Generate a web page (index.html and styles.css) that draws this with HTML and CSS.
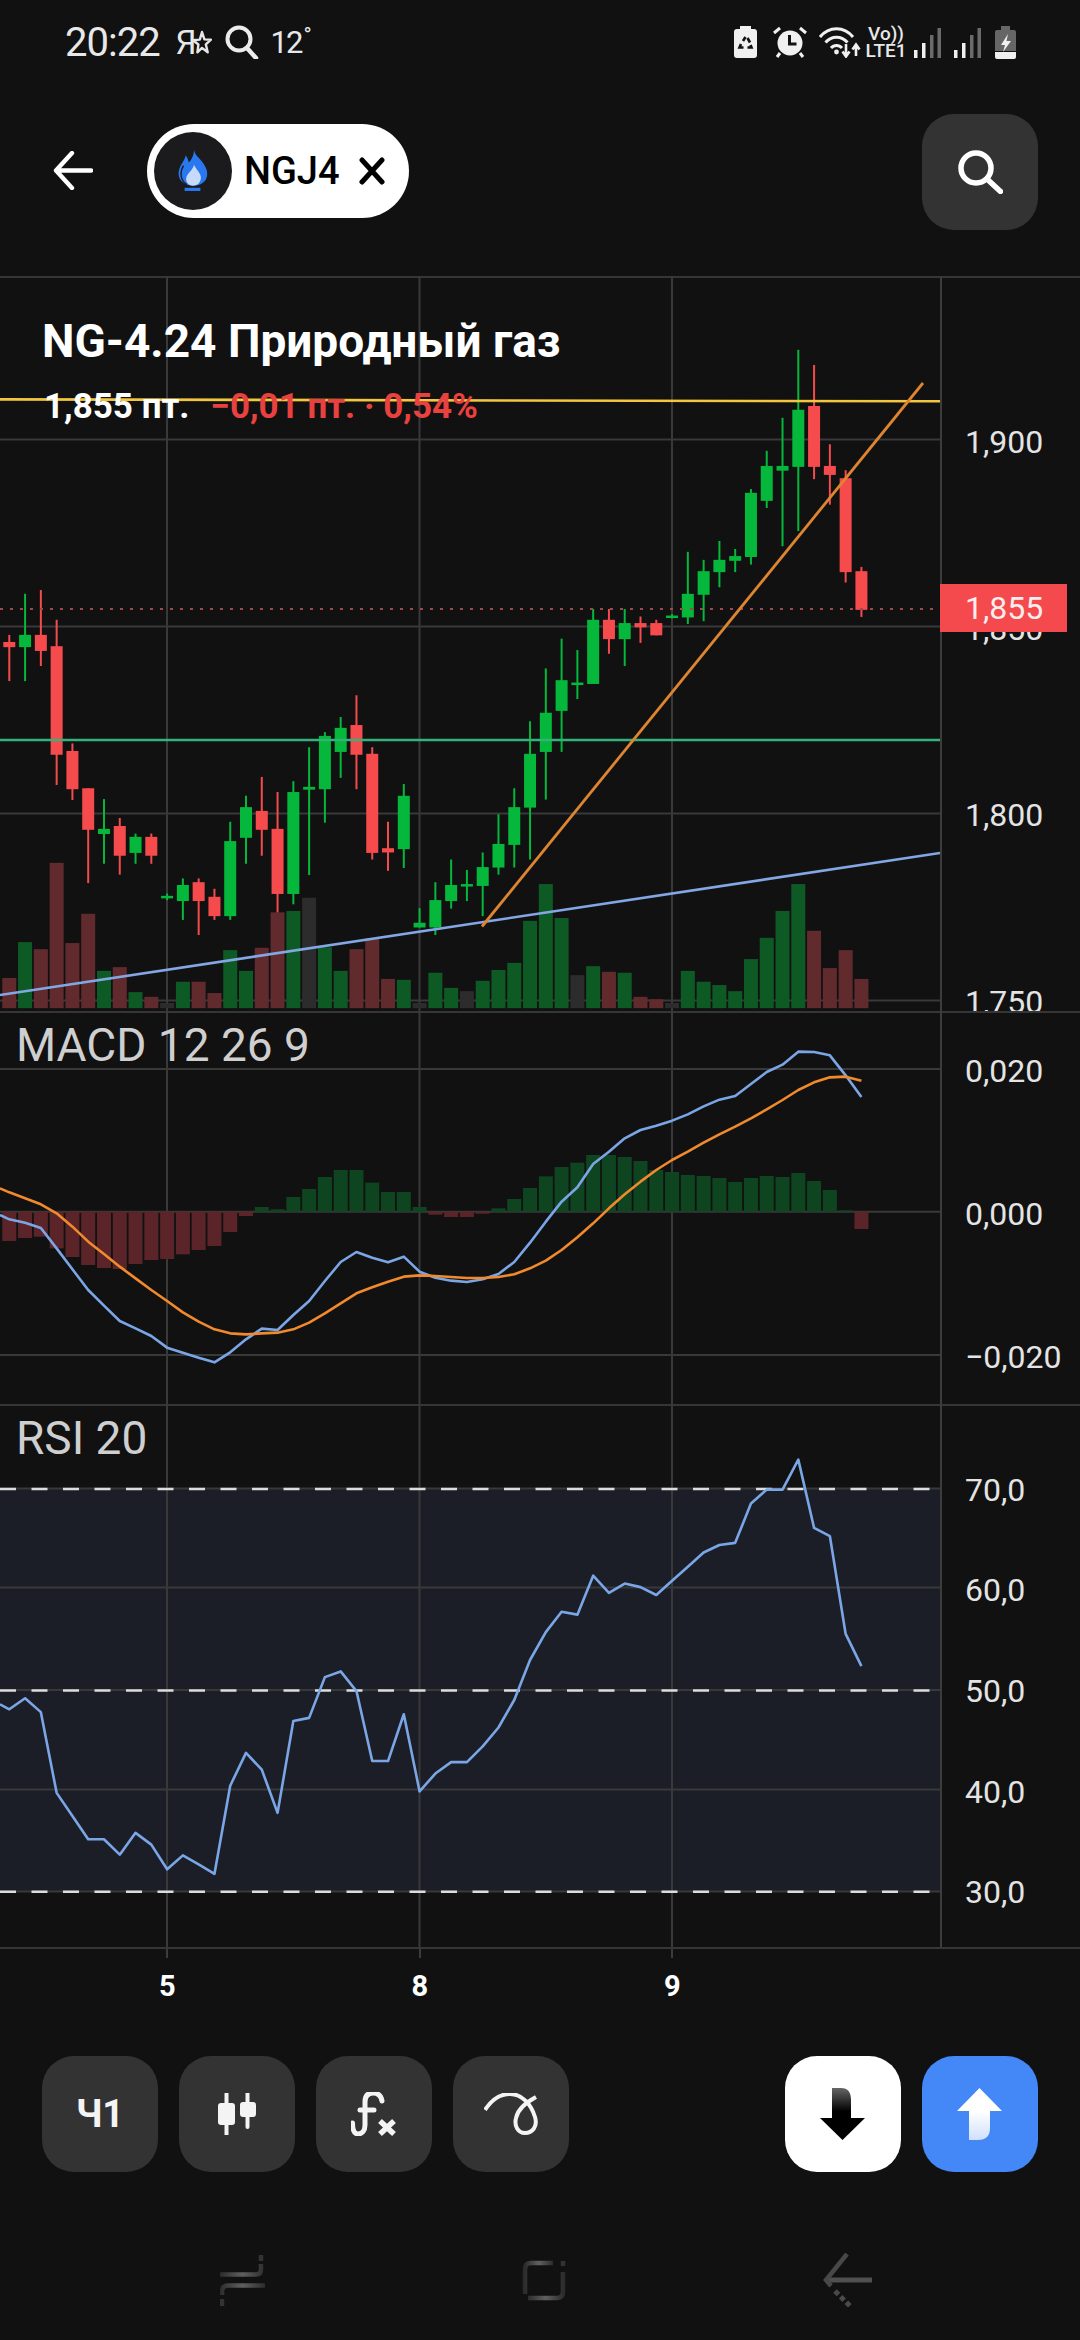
FILE: index.html
```html
<!DOCTYPE html>
<html lang="ru">
<head>
  <meta charset="UTF-8">
  <meta name="viewport" content="width=device-width, initial-scale=1.0">
  <title>NG-4.24</title>
  <link rel="stylesheet" href="styles.css">
</head>
<body>
  <div class="screen">
    <!-- status bar -->
    <div class="status-bar">
      <div class="status-left">
        <span class="clock">20:22</span>
        <span class="ya">Я</span>
        <svg class="star" viewBox="0 0 20 25"><path d="M10 2l2.400 7.400 6.600.3-5.200 4.600 1.900 8-5.700-4.400-4.600 4.400 1-7.800L1 10.200l6.800-.6z" fill="none" stroke="#e6e6e6" stroke-width="2.400" stroke-linejoin="round"/></svg>
        <svg class="status-search" viewBox="0 0 34 34"><circle cx="14" cy="14" r="11.500" fill="none" stroke="#ececec" stroke-width="4"/><path d="M22 23l9 10" stroke="#ececec" stroke-width="4.500" stroke-linecap="round"/></svg>
        <span class="temp">12<sup>°</sup></span>
      </div>
      <div class="status-right">
        <svg class="ic-bat" viewBox="0 0 23 32">
          <path d="M6 0h11v3h3a3 3 0 0 1 3 3v23a3 3 0 0 1-3 3H3a3 3 0 0 1-3-3V6a3 3 0 0 1 3-3h3z" fill="#f0f0f0"/>
          <path d="M11.500 11l-2.500 4M13.500 12l2.500 4.500M16.500 19l1 2.500h-4M9.500 21.500H5.500l1.500-3.500" fill="none" stroke="#111" stroke-width="2.600"/>
        </svg>
        <svg class="ic-alarm" viewBox="0 0 34 32">
          <circle cx="17" cy="17" r="12.500" fill="#f0f0f0"/>
          <path d="M16.500 9v9h7" fill="none" stroke="#111" stroke-width="3"/>
          <path d="M1 7l6-5M33 7l-6-5M7 27l-3 4M27 27l3 4" stroke="#f0f0f0" stroke-width="3"/>
        </svg>
        <svg class="ic-wifi" viewBox="0 0 42 32">
          <path d="M1 11C10 0 25 0 34 11M6.500 16.500c6-7 16-7 22 0M12 22c3-3.500 8-3.500 11 0" fill="none" stroke="#f0f0f0" stroke-width="3"/>
          <circle cx="17.500" cy="26" r="2.400" fill="#f0f0f0"/>
          <path d="M27 18v11M23.500 25.500l3.500 5 3.500-5M37 30V20M33.500 23.500l3.500-5 3.500 5" fill="none" stroke="#f0f0f0" stroke-width="2.600"/>
        </svg>
        <div class="ic-net"><span>Vo))</span><span>LTE1</span></div>
        <svg class="ic-signal" viewBox="0 0 27 30">
          <rect x="0" y="22" width="3.500" height="8" fill="#f0f0f0"/><rect x="8" y="15" width="3.500" height="15" fill="#f0f0f0"/>
          <rect x="16" y="7" width="3.500" height="23" fill="#6a6a6a"/><rect x="23.500" y="0" width="3.500" height="30" fill="#6a6a6a"/>
        </svg>
        <svg class="ic-signal2" viewBox="0 0 27 30">
          <rect x="0" y="22" width="3.500" height="8" fill="#f0f0f0"/><rect x="8" y="15" width="3.500" height="15" fill="#f0f0f0"/>
          <rect x="16" y="7" width="3.500" height="23" fill="#6a6a6a"/><rect x="23.500" y="0" width="3.500" height="30" fill="#6a6a6a"/>
        </svg>
        <svg class="ic-charge" viewBox="0 0 21 33">
          <path d="M6 0h9v4h4a2 2 0 0 1 2 2v19H0V6a2 2 0 0 1 2-2h4z" fill="#666"/>
          <path d="M0 26h21v5a2 2 0 0 1-2 2H2a2 2 0 0 1-2-2z" fill="#f0f0f0"/>
          <path d="M13 8L6 19h4l-2 7 8-11h-4.500z" fill="#f0f0f0"/>
        </svg>
      </div>
    </div>

    <!-- top bar -->
    <div class="top-bar">
      <svg class="back" viewBox="0 0 40 39"><path d="M38 19.500H4M19 2L3 19.500 19 37" fill="none" stroke="#fff" stroke-width="4.400" stroke-linecap="round" stroke-linejoin="round"/></svg>
      <div class="ticker-pill">
        <div class="ticker-logo">
          <svg viewBox="0 0 30 40" class="flame">
            <path d="M16 0c1 7 9 9 12 19 2.500 9-4 15-13 15S0 28 1.500 20C3 13 7 11 8 5c2 3 3 6 3 7 3-3 5-8 5-12z" fill="#2a78f0"/>
            <path d="M6 15C2 21 3 29 9 33" fill="none" stroke="#1b1b1d" stroke-width="1.300"/>
            <path d="M16 14c2 5 7 8 6.500 13-.5 5-4 7-7.500 7-4 0-7-3-6.500-7 .5-5 6-7 7.500-13z" fill="#c6daf9"/>
            <rect x="7" y="36" width="15" height="3" fill="#2a78f0"/>
          </svg>
        </div>
        <span class="ticker-name">NGJ4</span>
        <svg class="ticker-x" viewBox="0 0 26 28"><path d="M3 3l20 22M23 3L3 25" stroke="#000" stroke-width="5" stroke-linecap="round"/></svg>
      </div>
      <button class="tool-btn search-btn">
        <svg class="search-ic" viewBox="0 0 45 44"><circle cx="18" cy="18" r="15" fill="none" stroke="#fff" stroke-width="5.500"/><path d="M29 29l13.500 12.500" stroke="#fff" stroke-width="5.500" stroke-linecap="round"/></svg>
      </button>
    </div>

    <!-- chart panes -->
    <div class="pane pane-main">
      <svg class="plot" id="main-plot"></svg>
      <div class="axis">
        <span class="tick" style="top:167px">1,900</span>
        <span class="tick" style="top:354px">1,850</span>
        <span class="tick" style="top:540px">1,800</span>
        <span class="tick" style="top:727px">1,750</span>
        <div class="price-tag">1,855</div>
      </div>
      <div class="quote">
        <div class="quote-title">NG-4.24 Природный газ</div>
        <div class="quote-sub"><span>1,855 пт.</span><span class="quote-change">−0,01 пт. · 0,54%</span></div>
      </div>
    </div>

    <div class="pane pane-macd">
      <svg class="plot" id="macd-plot"></svg>
      <div class="axis">
        <span class="tick" style="top:61px">0,020</span>
        <span class="tick" style="top:204px">0,000</span>
        <span class="tick" style="top:347px">−0,020</span>
      </div>
      <div class="pane-name">MACD 12 26 9</div>
    </div>

    <div class="pane pane-rsi">
      <svg class="plot" id="rsi-plot"></svg>
      <div class="axis">
        <span class="tick" style="top:87px">70,0</span>
        <span class="tick" style="top:187px">60,0</span>
        <span class="tick" style="top:288px">50,0</span>
        <span class="tick" style="top:389px">40,0</span>
        <span class="tick" style="top:489px">30,0</span>
      </div>
      <div class="pane-name">RSI 20</div>
    </div>

    <div class="time-axis"><span>5</span><span>8</span><span>9</span></div>

    <!-- bottom buttons -->
    <div class="actions">
      <button class="tool-btn period">Ч1</button>
      <button class="tool-btn">
        <svg class="ic-candles" viewBox="0 0 38 42">
          <path d="M8.500 0v42M29.500 0v34" stroke="#f4f4f4" stroke-width="4" stroke-linecap="round"/>
          <rect x="0" y="10" width="17" height="22" rx="3" fill="#f4f4f4"/>
          <rect x="22" y="9" width="16" height="15" rx="3" fill="#f4f4f4"/>
        </svg>
      </button>
      <button class="tool-btn">
        <svg class="ic-fx" viewBox="0 0 46 44">
          <path d="M31 9c-1-6-5-8-9-8-5 0-8 3-8 9v23c0 6-3 9-7 9-4 0-5.500-4-5.500-11M9 18h14" fill="none" stroke="#f4f4f4" stroke-width="5" stroke-linecap="round"/>
          <path d="M29 29l14 13M43 29L29 42" stroke="#f4f4f4" stroke-width="5.500"/>
        </svg>
      </button>
      <button class="tool-btn">
        <svg class="ic-loop" viewBox="0 0 54 42"><path d="M1 17C8 6 17 1 26 1c12 0 21 10 25 23 3 10-3 16-10 16s-11-7-9-15c2-10 11-16 20-21" fill="none" stroke="#f4f4f4" stroke-width="4"/></svg>
      </button>
      <button class="tool-btn sell">
        <svg class="ic-arrow" viewBox="0 0 46 52">
          <defs><linearGradient id="sell-grad" x1="0" y1="0" x2="0" y2="1"><stop offset="0" stop-color="#666"/><stop offset=".45" stop-color="#000"/></linearGradient></defs>
          <path d="M12 0h9c7 0 10 4 10 12v18h14L22.500 52 0 30h12z" fill="url(#sell-grad)"/>
        </svg>
      </button>
      <button class="tool-btn buy">
        <svg class="ic-arrow" viewBox="0 0 46 52">
          <defs><linearGradient id="buy-grad" x1="0" y1="0" x2="0" y2="1"><stop offset=".45" stop-color="#fff"/><stop offset="1" stop-color="#cfe0fc"/></linearGradient></defs>
          <path d="M22.500 0L45 23H33v17c0 8-4 12-12 12h-9V23H0z" fill="url(#buy-grad)"/>
        </svg>
      </button>
    </div>

    <!-- system nav -->
    <div class="nav-bar">
      <svg class="nav-recent" viewBox="0 0 45 51">
        <defs><linearGradient id="nav-grad"><stop offset="0" stop-color="#2c2c2c"/><stop offset=".5" stop-color="#606060"/><stop offset="1" stop-color="#2c2c2c"/></linearGradient></defs>
        <path d="M0 19.500h36q5 0 5-5V9M45 30.500H8q-6 0-6 6V40" fill="none" stroke="url(#nav-grad)" stroke-width="4.500"/>
        <path d="M41 0v6M2 44v7" stroke="#333" stroke-width="4.500"/>
      </svg>
      <svg class="nav-home" viewBox="0 0 44 41">
        <path d="M31 3H9Q3 3 3 9v25" fill="none" stroke="url(#nav-grad)" stroke-width="4.500"/>
        <path d="M6 38h29q6 0 6-6V12" fill="none" stroke="url(#nav-grad)" stroke-width="4.500"/>
        <path d="M41 1v5" stroke="#333" stroke-width="4.500"/>
      </svg>
      <svg class="nav-back" viewBox="0 0 49 54">
        <path d="M49 27H5" stroke="#505050" stroke-width="5"/>
        <path d="M24 1L3 27l5 6" fill="none" stroke="#484848" stroke-width="4.500"/>
        <path d="M12 38l15 15" stroke="#4a4a4a" stroke-width="5" stroke-dasharray="5 3"/>
      </svg>
    </div>
  </div>

  <script src="chart.js"></script>
</body>
</html>
```

FILE: styles.css
```css
* {
  box-sizing: border-box;
}

body, html {
  margin: 0;
  background: #111112;
  font-family: 'Roboto', 'Noto Sans', sans-serif;
}

.screen {
  width: 1080px;
  height: 2340px;
  display: flex;
  flex-direction: column;
  overflow: hidden;
  background: #111112;
  color: #fff;
}

/* status bar */
.status-bar {
  height: 84px;
  flex: none;
  display: flex;
  align-items: center;
  justify-content: space-between;
  padding: 0 64px 0 65px;
  color: #e8e8e8;
}

.status-left {
  display: flex;
  align-items: center;
}

.clock {
  font-size: 40px;
  letter-spacing: -1px;
  margin-right: 16px;
}

.ya {
  font-size: 33px;
  width: 16px;
}

.star {
  width: 20px;
  height: 25px;
  margin-right: 13px;
}

.status-search {
  width: 34px;
  height: 34px;
  margin-right: 12px;
}

.temp {
  font-size: 31px;
  letter-spacing: -2px;
}

.temp sup {
  font-size: 22px;
  line-height: 0;
  vertical-align: 10px;
  margin-left: 2px;
}

.status-right {
  display: flex;
  align-items: center;
}

.ic-bat {
  width: 23px;
  height: 32px;
  margin-right: 16px;
}

.ic-alarm {
  width: 34px;
  height: 32px;
  margin-right: 12px;
}

.ic-wifi {
  width: 42px;
  height: 32px;
  margin-right: 5px;
}

.ic-net {
  width: 40px;
  display: flex;
  flex-direction: column;
  align-items: center;
  font-size: 19px;
  line-height: 17px;
  font-weight: 500;
  margin-right: 8px;
}

.ic-signal,
.ic-signal2 {
  width: 27px;
  height: 30px;
  margin-top: 2px;
}

.ic-signal {
  margin-right: 13px;
}

.ic-signal2 {
  margin-right: 14px;
}

.ic-charge {
  width: 21px;
  height: 33px;
}

/* top bar */
.top-bar {
  height: 192px;
  flex: none;
  display: flex;
  align-items: flex-start;
  padding: 30px 42px 0 53px;
}

.back {
  width: 40px;
  height: 39px;
  margin-top: 37px;
  margin-right: 54px;
}

.ticker-pill {
  width: 262px;
  height: 94px;
  margin-top: 10px;
  padding-left: 7px;
  display: flex;
  align-items: center;
  border-radius: 47px;
  background: #fff;
  color: #000;
}

.ticker-logo {
  width: 78px;
  height: 78px;
  flex: none;
  display: flex;
  align-items: center;
  justify-content: center;
  border-radius: 50%;
  background: #1b1b1d;
}

.flame {
  width: 32px;
  height: 42px;
}

.ticker-name {
  font-size: 38px;
  font-weight: 500;
  margin-left: 12px;
  margin-right: 19px;
}

.ticker-x {
  width: 26px;
  height: 28px;
}

.tool-btn {
  width: 116px;
  height: 116px;
  flex: none;
  padding: 0;
  border: none;
  border-radius: 32px;
  background: #333334;
  color: #f4f4f4;
  font-family: inherit;
  display: flex;
  align-items: center;
  justify-content: center;
}

.search-btn {
  margin-left: auto;
}

.search-ic {
  width: 45px;
  height: 44px;
}

/* chart panes */
.pane {
  position: relative;
  flex: none;
  display: flex;
  overflow: hidden;
  box-shadow: inset 0 2px #363637; /* separator, must not push the plot down */
}

.pane-main {
  height: 735px;
}

.pane-macd {
  height: 393px;
}

.pane-rsi {
  height: 543px;
}

.plot {
  width: 940px;
  height: 100%;
  flex: none;
  display: block;
}

.axis {
  position: relative;
  flex: 1;
  border-left: 2px solid #3c3c3d;
}

.tick {
  position: absolute;
  left: 23px;
  font-size: 32px;
  line-height: 1;
  color: #e4e4e4;
  transform: translateY(-53%);
  white-space: nowrap;
}

.price-tag {
  position: absolute;
  top: 308px;
  left: -2px;
  width: 127px;
  height: 48px;
  padding-left: 25px;
  background: #f44a4d;
  color: #fdeeee;
  font-size: 32px;
  line-height: 48px;
}

.quote {
  position: absolute;
  left: 42px;
  top: 40px;
}

.quote-title {
  font-size: 46px;
  line-height: 50px;
  font-weight: 700;
  white-space: nowrap;
}

.quote-sub {
  display: flex;
  gap: 21px;
  margin-top: 21px;
  margin-left: 2px;
  font-size: 35px;
  line-height: 40px;
  font-weight: 700;
  white-space: nowrap;
}

.quote-change {
  color: #e8413f;
}

.pane-name {
  position: absolute;
  left: 16px;
  top: 9px;
  font-size: 46px;
  line-height: 1.100;
  color: #cfcfcf;
  white-space: nowrap;
}

/* time axis, under the last pane */
.time-axis {
  height: 109px;
  flex: none;
  display: flex;
  padding-left: 41px;
  border-top: 2px solid #363637;
  font-size: 29px;
  font-weight: 700;
}

.time-axis span {
  position: relative;
  width: 252.500px;
  padding-top: 20px;
  text-align: center;
}

.time-axis span::before {
  content: '';
  position: absolute;
  top: 0;
  left: 125px;
  width: 2px;
  height: 9px;
  background: #3c3c3d;
}

/* bottom buttons */
.actions {
  flex: none;
  display: flex;
  gap: 21px;
  padding: 0 42px;
}

.period {
  font-size: 38px;
  font-weight: 700;
}

.ic-candles {
  width: 38px;
  height: 42px;
}

.ic-fx {
  width: 46px;
  height: 44px;
}

.ic-loop {
  width: 54px;
  height: 42px;
}

.ic-arrow {
  width: 46px;
  height: 52px;
}

.sell {
  margin-left: auto;
  background: #fff;
}

.buy {
  background: #4488f8;
}

/* system nav */
.nav-bar {
  flex: none;
  display: flex;
  justify-content: space-between;
  align-items: center;
  margin-top: 81px;
  padding: 0 208px 0 220px;
}

.nav-recent {
  width: 45px;
  height: 51px;
}

.nav-home {
  width: 44px;
  height: 41px;
}

.nav-back {
  width: 49px;
  height: 54px;
}
```

FILE: chart.js
```js
// candle slots share one x step over all three panes
const STEP = 15.78;
const X0 = 9.3;
const GRID_X = [167, 419.5, 672];
const cx = i => X0 + STEP * i;

const GREEN = '#05b83b';
const RED = '#f64b4d';
const GRID = '#39393a';

// the numbers below were read off the picture, each pane has its own scale
const mainY = v => 4 + v / 2.119;
const macdY = v => v / 3 - 11;
const rsiY = v => v / 2.8 - 4;

// wick top, wick bottom, body top, body bottom, colour
const candles = [
  [752,850,767,778,'r'],[665,850,752,778,'g'],[657,818,752,786,'r'],[720,1070,776,1006,'r'],
  [982,1102,998,1079,'r'],[1077,1278,1077,1165,'r'],[1100,1237,1163,1174,'g'],[1140,1260,1157,1220,'r'],
  [1173,1237,1180,1214,'g'],[1173,1237,1180,1220,'r'],[1300,1314,1305,1309,'g'],[1268,1356,1282,1316,'g'],
  [1268,1388,1276,1316,'r'],[1290,1356,1307,1348,'r'],[1148,1356,1189,1348,'g'],[1093,1237,1117,1182,'g'],
  [1053,1220,1125,1165,'r'],[1085,1340,1163,1301,'r'],[1062,1323,1085,1301,'g'],[990,1261,1074,1080,'g'],
  [958,1150,966,1079,'g'],[926,1055,949,1000,'g'],[880,1079,943,1006,'r'],[990,1228,1004,1214,'r'],
  [1148,1252,1204,1213,'r'],[1068,1246,1093,1206,'g'],[1331,1372,1362,1372,'g'],[1276,1388,1314,1372,'g'],
  [1228,1332,1282,1316,'g'],[1250,1316,1280,1285,'g'],[1213,1348,1244,1284,'g'],[1132,1260,1195,1245,'g'],
  [1077,1245,1117,1197,'g'],[935,1228,1004,1118,'g'],[823,1101,917,1000,'g'],[760,1000,848,913,'g'],
  [784,888,853,858,'g'],[697,856,720,856,'g'],[697,792,720,761,'r'],[697,818,727,761,'g'],
  [713,769,727,736,'r'],[720,753,727,753,'r'],[708,717,711,715,'g'],[576,729,665,715,'g'],
  [593,723,617,667,'g'],[553,651,593,619,'g'],[570,619,585,595,'g'],[443,603,451,587,'g'],
  [362,483,394,468,'g'],[292,564,394,404,'g'],[148,532,275,396,'g'],[180,422,267,396,'r'],
  [348,476,394,413,'r'],[403,641,420,619,'r'],[608,714,617,699,'r']
];

// top of each volume bar and its colour (n = grey, no change)
const volumes = [
  [1479,'r'],[1403,'g'],[1418,'r'],[1235,'r'],[1405,'r'],[1343,'r'],[1464,'g'],[1456,'r'],[1509,'g'],[1519,'r'],
  [1532,'n'],[1487,'g'],[1487,'r'],[1511,'r'],[1420,'g'],[1464,'g'],[1415,'r'],[1340,'r'],[1337,'g'],[1309,'n'],
  [1414,'g'],[1464,'g'],[1418,'r'],[1395,'r'],[1481,'r'],[1483,'g'],[1532,'n'],[1468,'g'],[1500,'g'],[1507,'n'],
  [1485,'g'],[1462,'g'],[1447,'g'],[1358,'g'],[1280,'g'],[1352,'g'],[1473,'n'],[1454,'g'],[1466,'r'],[1468,'g'],
  [1519,'r'],[1524,'r'],[1532,'n'],[1464,'g'],[1487,'g'],[1494,'g'],[1507,'g'],[1439,'g'],[1394,'g'],[1337,'g'],
  [1280,'g'],[1379,'r'],[1458,'r'],[1420,'r'],[1481,'r']
];
const VOL_COLOR = { g: '#0e5a25', r: '#612a2d', n: '#2c2c2d' };

const macdHist = [
  723,714,710,745,771,795,804,807,792,780,777,763,750,738,696,648,621,628,591,567,531,510,510,548,576,576,621,
  644,651,651,641,625,597,564,529,501,488,465,465,471,483,510,516,525,528,534,546,534,528,531,519,543,570,631,687
];
const macdLine = [
  658,668,684,745,808,870,917,963,985,1008,1043,1058,1073,1087,1057,1018,986,990,945,903,843,786,756,773,787,770,
  815,833,842,846,838,822,786,728,665,605,562,492,455,415,390,377,362,343,319,299,288,252,216,194,155,156,166,226,291
];
const macdSignal = [
  577,595,613,640,680,725,762,800,835,870,903,937,965,988,1000,1003,1000,998,988,968,940,910,880,862,845,830,
  826,828,831,834,834,831,823,805,782,750,712,670,625,583,545,510,480,455,428,403,380,355,328,300,270,247,232,230,242
];
const rsiLine = [
  866,835,874,1100,1165,1230,1230,1273,1212,1245,1314,1275,1300,1327,1080,988,1035,1156,899,890,776,760,815,1011,
  1011,880,1096,1046,1014,1014,970,917,840,728,650,593,601,492,540,514,524,546,506,467,427,406,400,290,251,251,167,358,381,655,745
];

function line(x1, y1, x2, y2, color, width, extra = '') {
  return `<line x1="${x1}" y1="${y1}" x2="${x2}" y2="${y2}" stroke="${color}" stroke-width="${width}" ${extra}/>`;
}

function polyline(points, color, width) {
  return `<polyline points="${points.join(' ')}" fill="none" stroke="${color}" stroke-width="${width}" stroke-linejoin="round"/>`;
}

function grid(rows, height) {
  let out = '';
  rows.forEach(y => { out += line(0, y, 940, y, GRID, 2); });
  GRID_X.forEach(x => { out += line(x, 0, x, height, GRID, 2); });
  return out;
}

function drawMain() {
  const svg = document.getElementById('main-plot');
  const baseY = mainY(1543);
  let out = grid([163.5, 350.5, 537.5, 724.5], 735);

  volumes.forEach(([top, c], i) => {
    const y = mainY(top);
    out += `<rect x="${cx(i) - 7}" y="${y}" width="14" height="${baseY - y}" fill="${VOL_COLOR[c]}"/>`;
  });

  candles.forEach(([wt, wb, bt, bb, c], i) => {
    const color = c === 'g' ? GREEN : RED;
    const h = Math.max((bb - bt) / 2.119, 2.5);
    out += line(cx(i), mainY(wt), cx(i), mainY(wb), color, 2);
    out += `<rect x="${cx(i) - 6}" y="${mainY(bt)}" width="12" height="${h}" fill="${color}"/>`;
  });

  // drawn levels and trend lines go on top
  out += line(0, 123.4, 940, 125.3, '#f3c63f', 2.6);
  out += line(0, 333, 940, 333, '#9c4a4e', 2, 'stroke-dasharray="3 7"');
  out += line(0, 464, 940, 464, '#33b27a', 2.6);
  out += line(0, 719, 940, 577, '#83a6e4', 2.6);
  out += line(482, 650.5, 923, 107, '#dd8530', 2.8);
  svg.innerHTML = out;
}

function drawMacd() {
  const svg = document.getElementById('macd-plot');
  const zero = macdY(635);
  let out = grid([58, 200.7, 344], 393);

  macdHist.forEach((v, i) => {
    const y = macdY(v);
    const color = v > 635 ? '#5a2428' : '#0e4520';
    out += `<rect x="${cx(i) - 7}" y="${Math.min(y, zero)}" width="14" height="${Math.abs(y - zero)}" fill="${color}"/>`;
  });

  const blue = [`0,${macdY(645)}`].concat(macdLine.map((v, i) => `${cx(i)},${macdY(v)}`));
  const orange = [`0,${macdY(565)}`].concat(macdSignal.map((v, i) => `${cx(i)},${macdY(v)}`));
  out += polyline(blue, '#7ba6e6', 2.6);
  out += polyline(orange, '#f08a2c', 2.6);
  svg.innerHTML = out;
}

function drawRsi() {
  const svg = document.getElementById('rsi-plot');
  // 70-30 band
  let out = `<rect x="0" y="84" width="940" height="403" fill="#1b1e27"/>`;
  out += grid([84.6, 183.5, 286, 385.6, 487.4], 543);

  [85, 286.5, 487.8].forEach(y => {
    out += line(0, y, 930, y, '#dcdcdc', 2.6, 'stroke-dasharray="16 15.5"');
  });

  const pts = [`0,${rsiY(852)}`].concat(rsiLine.map((v, i) => `${cx(i)},${rsiY(v)}`));
  out += polyline(pts, '#7ba6e6', 2.6);
  svg.innerHTML = out;
}

drawMain();
drawMacd();
drawRsi();
```
